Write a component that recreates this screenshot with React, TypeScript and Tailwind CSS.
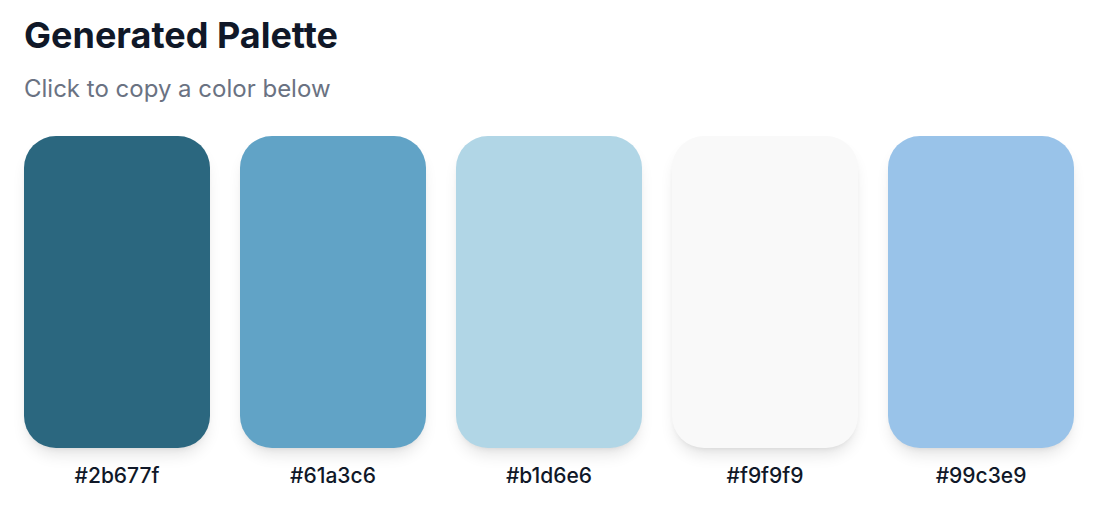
const colors = ["#2b677f", "#61a3c6", "#b1d6e6", "#f9f9f9", "#99c3e9"];

const swatchBg: Record<string, string> = {
  "#2b677f": "bg-[#2b677f]",
  "#61a3c6": "bg-[#61a3c6]",
  "#b1d6e6": "bg-[#b1d6e6]",
  "#f9f9f9": "bg-[#f9f9f9]",
  "#99c3e9": "bg-[#99c3e9]",
};

export default function App() {
  return (
    <div className="min-h-screen bg-white px-6 pt-[15px] font-['Inter',sans-serif]">
      <h1 className="text-[36px] font-bold leading-10 text-gray-900">Generated Palette</h1>
      <p className="mt-[18px] text-2xl leading-8 text-gray-500">Click to copy a color below</p>

      <div className="mt-[31px] flex gap-[30px]">
        {colors.map((c) => (
          <button key={c} className="flex w-[186px] flex-col items-center">
            <div className={`h-[312px] w-full rounded-[32px] shadow-lg ${swatchBg[c]}`} />
            <span className="mt-[14px] text-[21px] leading-7 font-medium text-gray-900">{c}</span>
          </button>
        ))}
      </div>
    </div>
  );
}
